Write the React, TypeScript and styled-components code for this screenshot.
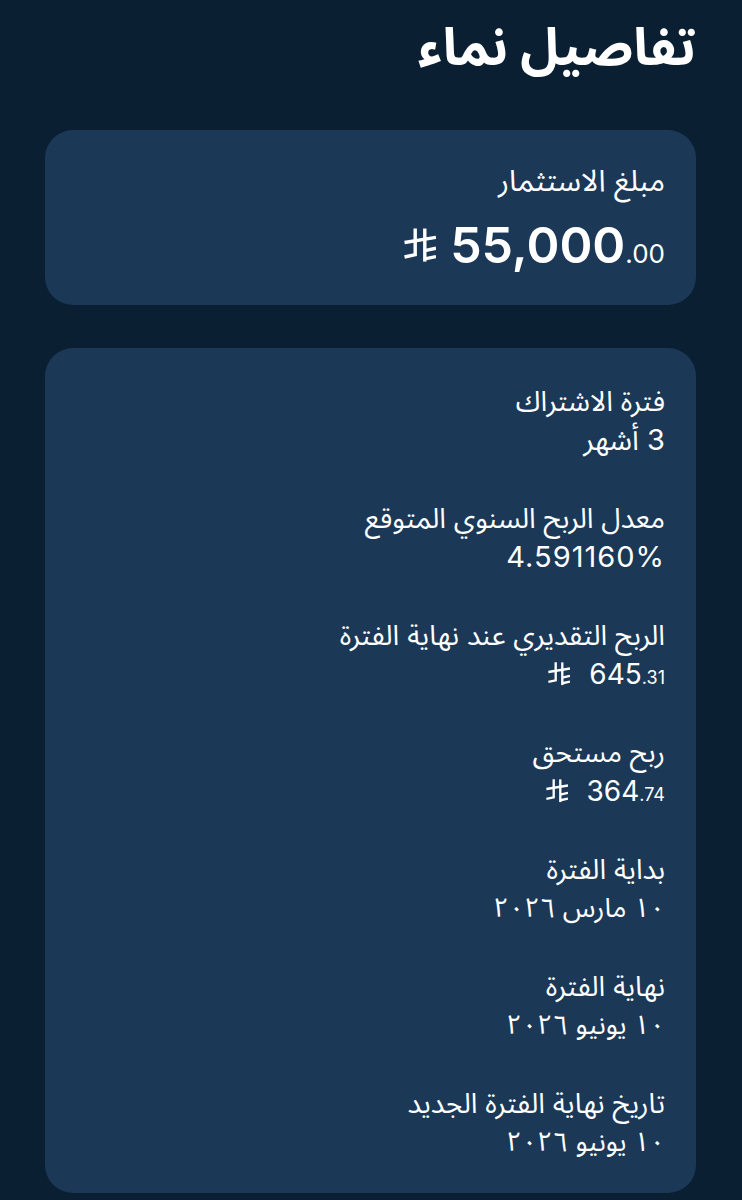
import React from 'react';
import styled, { createGlobalStyle } from 'styled-components';

const GlobalStyle = createGlobalStyle`
  html, body {
    margin: 0;
    padding: 0;
    background-color: #0b1f33;
  }

  body {
    font-family: Inter, "Noto Sans Arabic", "DejaVu Sans", sans-serif;
    color: #ffffff;
    -webkit-font-smoothing: antialiased;
  }
`;

const Page = styled.div`
  direction: rtl;
  min-height: 1200px;
  padding: 15px 46px 0 45px;
  box-sizing: border-box;
  display: flex;
  flex-direction: column;
`;

const Title = styled.h1`
  margin: 0 0 51px;
  font-size: 52px;
  line-height: 64px;
  font-weight: 700;
`;

const Card = styled.section<{ $gap: number }>`
  background-color: #1b3857;
  border-radius: 28px;
  padding: 32px 31px 30px;
  display: flex;
  flex-direction: column;
  gap: ${({ $gap }) => $gap}px;
  margin-bottom: 43px;
`;

const DetailsCard = styled(Card)`
  padding: 35px 31px 30px;
`;

const Label = styled.div<{ $size?: number }>`
  font-size: ${({ $size }) => $size ?? 28}px;
  line-height: 36px;
  font-weight: 400;
`;

const Value = styled.div<{ $size?: number; $spacing?: number }>`
  font-size: ${({ $size }) => $size ?? 29}px;
  letter-spacing: ${({ $spacing }) => $spacing ?? 0}px;
  line-height: 42px;
  height: 42px;
  font-weight: 400;
`;

const Amount = styled.div<{ $height: number; $gap: number }>`
  direction: ltr;
  display: flex;
  align-items: center;
  justify-content: flex-end;
  gap: ${({ $gap }) => $gap}px;
  height: ${({ $height }) => $height}px;
`;

const Figure = styled.span`
  display: inline-flex;
  align-items: baseline;
  line-height: 1;
`;

const Whole = styled.span<{ $size: number; $weight: number }>`
  font-size: ${({ $size }) => $size}px;
  font-weight: ${({ $weight }) => $weight};
`;

const Fraction = styled.span<{ $size: number }>`
  font-size: ${({ $size }) => $size}px;
  font-weight: 400;
`;

const Row = styled.div`
  display: flex;
  flex-direction: column;
`;

// Saudi riyal sign: two upright strokes, a long rising bar across both,
// a hooked foot on the left stroke and two short bars off the right one
const RiyalIcon = ({ width }: { width: number }) => (
  <svg
    width={width}
    height={(width * 32) / 30}
    viewBox="0 0 30 32"
    fill="none"
    stroke="#ffffff"
    strokeWidth={3.2}
    strokeLinecap="butt"
    strokeLinejoin="miter"
  >
    <path d="M10.5 0.5 V25 L0.5 27.2" />
    <path d="M19.5 0.5 V31.5" />
    <path d="M0.5 13.6 L30 8.8" />
    <path d="M19.5 21.2 L30 19" />
    <path d="M19.5 29 L30 26.8" />
  </svg>
);

type Money = { whole: string; fraction: string };

type MoneyProps = {
  value: Money;
  size: number;
  fractionSize: number;
  weight?: number;
  iconWidth: number;
  gap: number;
  height: number;
};

const MoneyValue = ({ value, size, fractionSize, weight = 400, iconWidth, gap, height }: MoneyProps) => (
  <Amount $height={height} $gap={gap}>
    <RiyalIcon width={iconWidth} />
    <Figure>
      <Whole $size={size} $weight={weight}>
        {value.whole}
      </Whole>
      <Fraction $size={fractionSize}>.{value.fraction}</Fraction>
    </Figure>
  </Amount>
);

type Detail = {
  label: string;
  value: string | Money;
  size?: number;
  spacing?: number;
};

const details: Detail[] = [
  { label: 'فترة الاشتراك', value: '3 أشهر' },
  { label: 'معدل الربح السنوي المتوقع', value: '4.591160%', spacing: 1 },
  { label: 'الربح التقديري عند نهاية الفترة', value: { whole: '645', fraction: '31' } },
  { label: 'ربح مستحق', value: { whole: '364', fraction: '74' } },
  { label: 'بداية الفترة', value: '١٠ مارس ٢٠٢٦', size: 27 },
  { label: 'نهاية الفترة', value: '١٠ يونيو ٢٠٢٦', size: 27 },
  { label: 'تاريخ نهاية الفترة الجديد', value: '١٠ يونيو ٢٠٢٦', size: 27 },
];

const App = () => (
  <>
    <GlobalStyle />
    <Page>
      <Title>تفاصيل نماء</Title>

      <Card $gap={17}>
        <Label $size={30}>مبلغ الاستثمار</Label>
        <MoneyValue
          value={{ whole: '55,000', fraction: '00' }}
          size={50}
          fractionSize={26}
          weight={600}
          iconWidth={32}
          gap={14}
          height={60}
        />
      </Card>

      <DetailsCard $gap={39}>
        {details.map((item) => (
          <Row key={item.label}>
            <Label>{item.label}</Label>
            {typeof item.value === 'string' ? (
              <Value $size={item.size} $spacing={item.spacing}>
                {item.value}
              </Value>
            ) : (
              <MoneyValue
                value={item.value}
                size={28}
                fractionSize={18}
                iconWidth={22}
                gap={19}
                height={42}
              />
            )}
          </Row>
        ))}
      </DetailsCard>
    </Page>
  </>
);

export default App;
